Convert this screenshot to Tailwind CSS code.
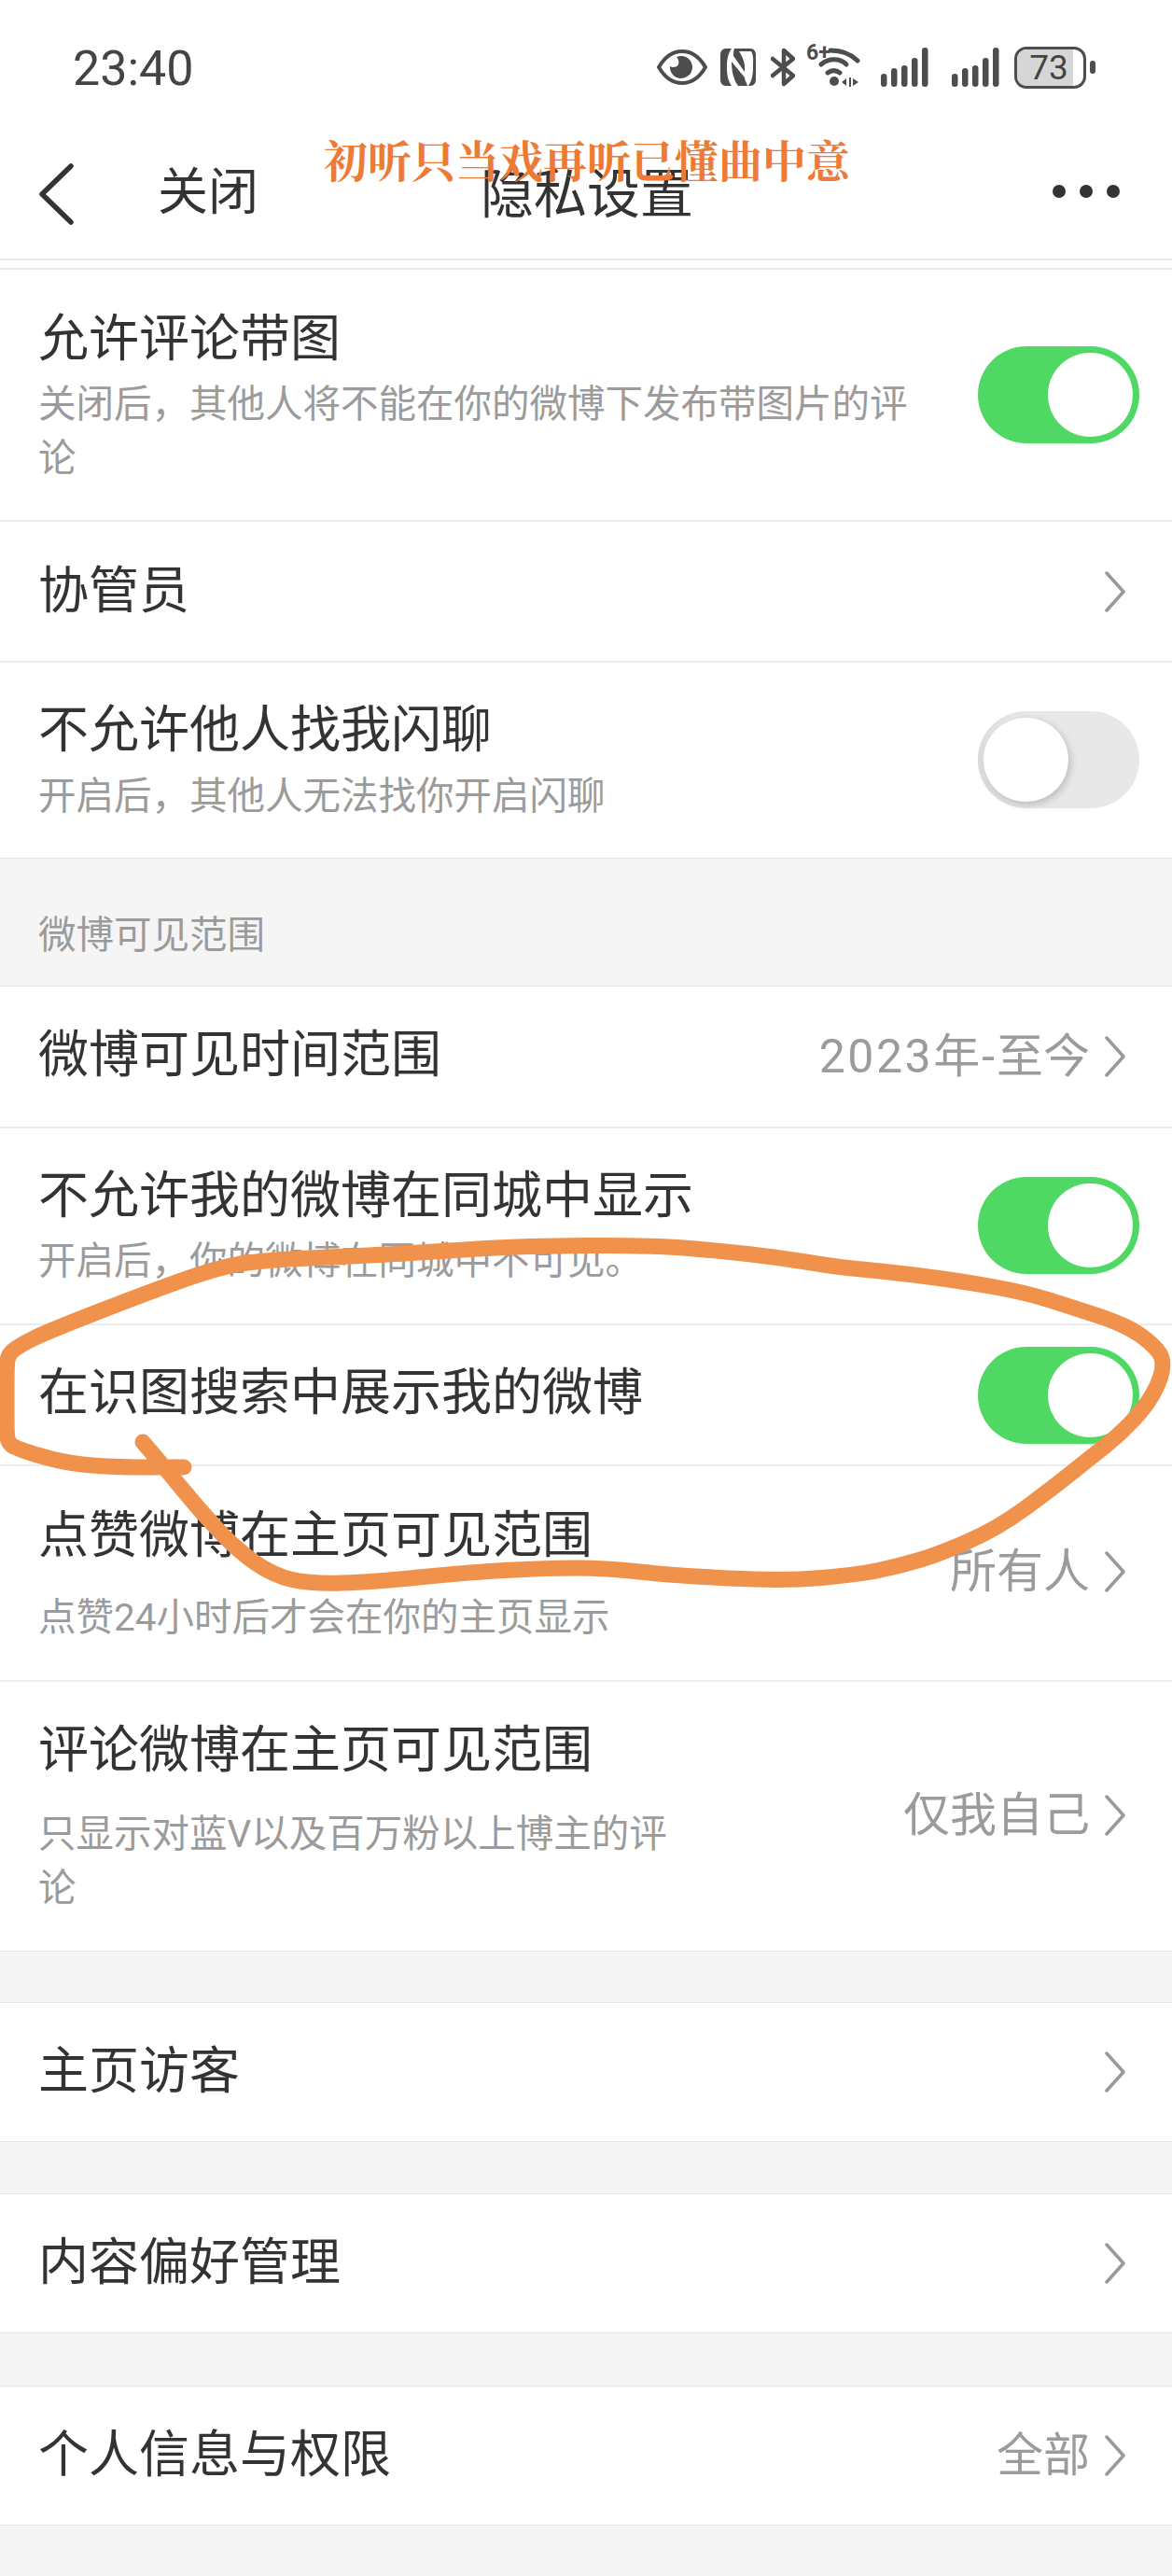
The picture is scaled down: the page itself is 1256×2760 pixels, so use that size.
<!DOCTYPE html>
<html lang="zh-CN">
<head>
    <meta charset="UTF-8">
    <title>隐私设置</title>
    <script src="https://cdn.jsdelivr.net/npm/@tailwindcss/browser@4"></script>
</head>
<body class="bg-[#f5f5f5] font-['Roboto','Noto_Sans_CJK_SC',sans-serif] text-[#333]">
<div class="relative w-[1256px] h-[2760px] overflow-hidden">
    <!-- Status bar -->
    <div class="h-[147px] bg-white flex items-start justify-between pt-[46px] pl-[78px] pr-[82px]">
        <div class="text-[52px] leading-[56px] text-[#444] font-['Roboto']">23:40</div>
        <div class="flex items-center h-[52px] text-[#4d4d4d]">
            <svg class="w-[54px] h-[38px]" viewBox="0 0 54 38"><path d="M2 19C9 7 17 2 27 2s18 5 25 17c-7 12-15 17-25 17S9 31 2 19z" fill="none" stroke="currentColor" stroke-width="4" stroke-linejoin="round"/><path fill-rule="evenodd" fill="currentColor" d="M27 7a12 12 0 1 1-13 11c3 2 8 1 9-2 1-3 0-6-2-8 2-1 4-1 6-1z"/></svg>
            <svg class="w-[38px] h-[40px] ml-[14px]" viewBox="0 0 38 40"><path fill="currentColor" d="M6 0h6c-4 6-5 12-5 20s1 14 5 20H6c-4 0-6-3-6-7V7c0-4 2-7 6-7zM15 0h17c4 0 6 3 6 7v26c0 4-2 7-6 7h-2c4-6 5-12 5-20S36 8 33 3H20c4 6 7 13 6 22L14 8c0-3 0-6 1-8zM12 14l14 17c0 3 3 7 3 9H19c-5-7-7-16-7-26z"/></svg>
            <svg class="w-[26px] h-[42px] ml-[16px]" viewBox="0 0 26 42"><path fill="none" stroke="currentColor" stroke-width="4.5" stroke-linecap="round" stroke-linejoin="round" d="M2 12l22 18-10 9V3l10 9L2 30"/></svg>
            <div class="relative w-[58px] h-[42px] ml-[12px]">
                <span class="absolute left-0 top-[-6px] text-[23px] leading-[24px] font-bold">6+</span>
                <svg class="absolute inset-0 w-[58px] h-[42px]" viewBox="0 0 58 42"><g fill="none" stroke="currentColor" stroke-width="5" stroke-linecap="round"><path d="M26 3c12 0 22 4 29 11"/><path d="M16 18c8-7 20-7 27 0"/><path d="M23 27c4-3 9-3 13 0"/></g><circle cx="30" cy="36" r="5" fill="currentColor"/><path fill="currentColor" d="M38 37l5-4v8zM46 32h2v10h-2zM50 33l6 4-6 4z"/></svg>
            </div>
            <svg class="w-[51px] h-[42px] ml-[22px]" viewBox="0 0 51 42"><g fill="currentColor"><rect x="0" y="28" width="6.5" height="14" rx="3.2"/><rect x="11" y="22" width="6.5" height="20" rx="3.2"/><rect x="22" y="19" width="6.5" height="23" rx="3.2"/><rect x="33" y="11" width="6.5" height="31" rx="3.2"/><rect x="44" y="0" width="6.5" height="42" rx="3.2"/></g></svg>
            <svg class="w-[51px] h-[42px] ml-[25px]" viewBox="0 0 51 42"><g fill="currentColor"><rect x="0" y="28" width="6.5" height="14" rx="3.2"/><rect x="11" y="22" width="6.5" height="20" rx="3.2"/><rect x="22" y="19" width="6.5" height="23" rx="3.2"/><rect x="33" y="11" width="6.5" height="31" rx="3.2"/><rect x="44" y="0" width="6.5" height="42" rx="3.2"/></g></svg>
            <div class="relative w-[77px] h-[45px] ml-[16px] border-[3px] border-[#4d4d4d] rounded-[13px] overflow-hidden bg-white flex">
                <div class="w-[60px] bg-[#d6d6d6]"></div>
                <span class="absolute inset-0 flex items-center justify-center text-[37px] leading-none pr-[3px] text-[#444] font-['Roboto']">73</span>
            </div>
            <div class="w-[6px] h-[14px] bg-[#4d4d4d] rounded-[3px] ml-[4px]"></div>
        </div>
    </div>

    <!-- Nav bar -->
    <div class="relative h-[132px] bg-white border-b-2 border-[#e8e8e8] flex items-center">
        <svg class="w-[40px] h-[66px] ml-[40px] mt-[-8px]" viewBox="0 0 40 66"><path d="M36 3L5 33l31 30" fill="none" stroke="#333" stroke-width="5.5" stroke-linecap="round" stroke-linejoin="round"/></svg>
        <span class="ml-[89px] mt-[-10px] text-[54px] leading-none">关闭</span>
        <span class="absolute left-[515px] top-[32px] text-[57px] leading-[60px]">隐私设置</span>
        <div class="ml-auto mr-[56px] mt-[-14px] flex gap-[15px]">
            <div class="w-[14px] h-[14px] rounded-full bg-[#333]"></div>
            <div class="w-[14px] h-[14px] rounded-full bg-[#333]"></div>
            <div class="w-[14px] h-[14px] rounded-full bg-[#333]"></div>
        </div>
    </div>
    <div class="h-[10px] bg-white border-b-2 border-[#e8e8e8]"></div>

    <!-- 评论 / 闪聊 -->
    <div class="bg-white border-b border-[#e6e6e6]">
        <div class="h-[270px] flex justify-between border-b-2 border-[#ececec] pl-[41px] pr-[35px]">
            <div class="pt-[43px]">
                <div class="text-[54px] leading-[64px]">允许评论带图</div>
                <div class="mt-[8px] w-[950px] text-[40.5px] leading-[58px] text-[#9b9b9b]">关闭后，其他人将不能在你的微博下发布带图片的评论</div>
            </div>
            <div class="w-[173px] h-[104px] mt-[82px] rounded-full bg-[#4fd964] relative"><div class="absolute right-[7px] top-[7px] w-[91px] h-[90px] rounded-full bg-white"></div></div>
        </div>
        <div class="h-[151px] flex items-center justify-between border-b-2 border-[#ececec] pl-[41px] pr-[50px]">
            <div class="text-[54px] leading-[64px]">协管员</div>
            <svg class="w-[22px] h-[44px]" viewBox="0 0 22 44"><path d="M2 2l18 20L2 42" fill="none" stroke="#999" stroke-width="3.5" stroke-linecap="round" stroke-linejoin="round"/></svg>
        </div>
        <div class="h-[209px] flex justify-between pl-[41px] pr-[35px]">
            <div class="pt-[41px]">
                <div class="text-[54px] leading-[64px]">不允许他人找我闪聊</div>
                <div class="mt-[9px] text-[40.5px] leading-[58px] text-[#9b9b9b]">开启后，其他人无法找你开启闪聊</div>
            </div>
            <div class="w-[173px] h-[104px] mt-[52px] rounded-full bg-[#e8e8e8] relative shadow-[inset_6px_0_6px_-4px_#d4d4d4]"><div class="absolute left-[6px] top-[7px] w-[91px] h-[90px] rounded-full bg-white shadow-[2px_3px_8px_rgba(0,0,0,0.2)]"></div></div>
        </div>
    </div>

    <!-- 微博可见范围 -->
    <div class="h-[136px] flex items-end pl-[41px] pb-[25px] text-[40.5px] leading-[58px] text-[#9b9b9b]">微博可见范围</div>
    <div class="bg-white border-y border-[#e6e6e6]">
        <div class="h-[152px] flex items-center justify-between border-b-2 border-[#ececec] pl-[41px] pr-[50px]">
            <div class="text-[54px] leading-[64px] pb-[3px]">微博可见时间范围</div>
            <div class="flex items-center gap-[16px]"><span class="text-[50px] leading-none text-[#9b9b9b]"><span class="tracking-[2.5px]">2023</span>年<span class="px-[2px]">-</span>至今</span><svg class="w-[22px] h-[44px]" viewBox="0 0 22 44"><path d="M2 2l18 20L2 42" fill="none" stroke="#999" stroke-width="3.5" stroke-linecap="round" stroke-linejoin="round"/></svg></div>
        </div>
        <div class="h-[211px] flex justify-between border-b-2 border-[#ececec] pl-[41px] pr-[35px]">
            <div class="pt-[41px]">
                <div class="text-[54px] leading-[64px]">不允许我的微博在同城中显示</div>
                <div class="mt-[8px] text-[40.5px] leading-[58px] text-[#9b9b9b]">开启后，你的微博在同城中不可见。</div>
            </div>
            <div class="w-[173px] h-[104px] mt-[52px] rounded-full bg-[#4fd964] relative"><div class="absolute right-[7px] top-[7px] w-[91px] h-[90px] rounded-full bg-white"></div></div>
        </div>
        <div class="h-[151px] flex items-center justify-between border-b-2 border-[#ececec] pl-[41px] pr-[35px]">
            <div class="text-[54px] leading-[64px] pb-[4px]">在识图搜索中展示我的微博</div>
            <div class="w-[173px] h-[104px] rounded-full bg-[#4fd964] relative"><div class="absolute right-[7px] top-[7px] w-[91px] h-[90px] rounded-full bg-white"></div></div>
        </div>
        <div class="h-[231px] flex items-center justify-between border-b-2 border-[#ececec] pl-[41px] pr-[50px]">
            <div class="self-start pt-[43px]">
                <div class="text-[54px] leading-[64px]">点赞微博在主页可见范围</div>
                <div class="mt-[26px] text-[40.5px] leading-[58px] text-[#9b9b9b]">点赞24小时后才会在你的主页显示</div>
            </div>
            <div class="flex items-center gap-[16px] mb-[3px]"><span class="text-[50px] leading-none text-[#9b9b9b]">所有人</span><svg class="w-[22px] h-[44px]" viewBox="0 0 22 44"><path d="M2 2l18 20L2 42" fill="none" stroke="#999" stroke-width="3.5" stroke-linecap="round" stroke-linejoin="round"/></svg></div>
        </div>
        <div class="h-[288px] flex items-center justify-between pl-[41px] pr-[50px]">
            <div class="self-start pt-[42px]">
                <div class="text-[54px] leading-[64px]">评论微博在主页可见范围</div>
                <div class="mt-[28px] w-[700px] text-[40.5px] leading-[58px] text-[#9b9b9b]">只显示对蓝V以及百万粉以上博主的评论</div>
            </div>
            <div class="flex items-center gap-[16px] mb-[3px]"><span class="text-[50px] leading-none text-[#9b9b9b]">仅我自己</span><svg class="w-[22px] h-[44px]" viewBox="0 0 22 44"><path d="M2 2l18 20L2 42" fill="none" stroke="#999" stroke-width="3.5" stroke-linecap="round" stroke-linejoin="round"/></svg></div>
        </div>
    </div>

    <!-- 主页访客 -->
    <div class="mt-[54px] h-[150px] bg-white border-y border-[#e6e6e6] flex items-center justify-between pl-[41px] pr-[50px]">
        <div class="text-[54px] leading-[64px]">主页访客</div>
        <svg class="w-[22px] h-[44px]" viewBox="0 0 22 44"><path d="M2 2l18 20L2 42" fill="none" stroke="#999" stroke-width="3.5" stroke-linecap="round" stroke-linejoin="round"/></svg>
    </div>
    <!-- 内容偏好管理 -->
    <div class="mt-[55px] h-[150px] bg-white border-y border-[#e6e6e6] flex items-center justify-between pl-[41px] pr-[50px]">
        <div class="text-[54px] leading-[64px]">内容偏好管理</div>
        <svg class="w-[22px] h-[44px]" viewBox="0 0 22 44"><path d="M2 2l18 20L2 42" fill="none" stroke="#999" stroke-width="3.5" stroke-linecap="round" stroke-linejoin="round"/></svg>
    </div>
    <!-- 个人信息与权限 -->
    <div class="mt-[56px] h-[150px] bg-white border-y border-[#e6e6e6] flex items-center justify-between pl-[41px] pr-[50px]">
        <div class="text-[54px] leading-[64px]">个人信息与权限</div>
        <div class="flex items-center gap-[16px]"><span class="text-[50px] leading-none text-[#9b9b9b]">全部</span><svg class="w-[22px] h-[44px]" viewBox="0 0 22 44"><path d="M2 2l18 20L2 42" fill="none" stroke="#999" stroke-width="3.5" stroke-linecap="round" stroke-linejoin="round"/></svg></div>
    </div>

    <!-- Overlays drawn on top of the screenshot -->
    <div class="absolute left-[347px] top-[142px] text-[47px] leading-[56px] font-bold text-[#ee7b35] whitespace-nowrap font-['Noto_Serif_CJK_SC','Noto_Sans_CJK_SC',serif]">初听只当戏再听已懂曲中意</div>
    <svg class="absolute inset-0 w-[1256px] h-[2760px] pointer-events-none" viewBox="0 0 1256 2760"><path id="scribble" fill="none" stroke="#f0924c" stroke-width="17" stroke-linecap="round" stroke-linejoin="round"/></svg>
</div>
<script>
    // smooth the hand drawn circle through midpoints
    const pts = [[153,1545],[177,1573],[213,1617],[253,1660],[293,1688],[333,1697],[400,1695],[497,1685],[585,1680],[649,1680],[721,1688],[841,1694],[920,1687],[963,1678],[1007,1665],[1070,1637],[1127,1595],[1167,1563],[1200,1537],[1228,1507],[1243,1480],[1247,1460],[1242,1447],[1220,1428],[1193,1415],[1153,1402],[1100,1385],[1027,1372],[947,1362],[900,1358],[833,1347],[769,1340],[697,1334],[561,1335],[481,1340],[400,1345],[283,1350],[233,1358],[150,1388],[50,1427],[20,1442],[8,1452],[7,1470],[7,1530],[8,1545],[17,1552],[67,1567],[117,1572],[197,1572]];
    let d = `M${pts[0][0]} ${pts[0][1]}`;
    for (let i = 1; i < pts.length - 1; i++) {
        const mx = (pts[i][0] + pts[i + 1][0]) / 2, my = (pts[i][1] + pts[i + 1][1]) / 2;
        d += ` Q${pts[i][0]} ${pts[i][1]} ${mx} ${my}`;
    }
    d += ` L${pts[pts.length - 1][0]} ${pts[pts.length - 1][1]}`;
    document.getElementById('scribble').setAttribute('d', d);
</script>
</body>
</html>
